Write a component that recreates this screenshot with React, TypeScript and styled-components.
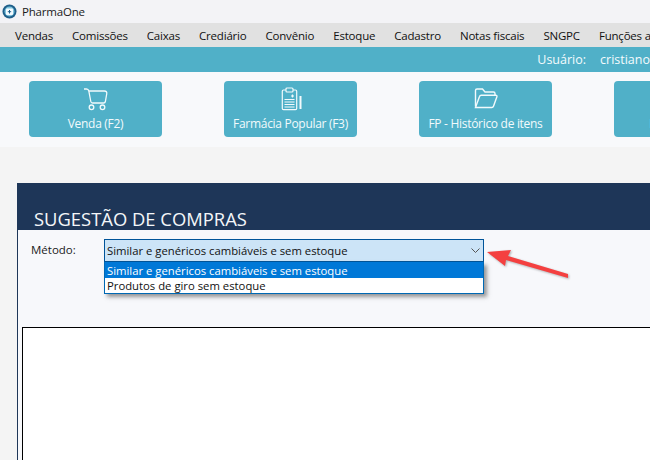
import styled, { createGlobalStyle } from "styled-components";

const GlobalStyle = createGlobalStyle`
  html, body {
    margin: 0;
    padding: 0;
    width: 650px;
    height: 460px;
    overflow: hidden;
    background: #f4f4f4;
    font-family: "Open Sans", "Noto Sans", sans-serif;
  }
  * { box-sizing: border-box; }
`;

const Wrapper = styled.div`
  position: relative;
  width: 650px;
  height: 460px;
  overflow: hidden;
  display: flex;
  flex-direction: column;
`;

const TitleBar = styled.div`
  height: 23px;
  flex: none;
  display: flex;
  align-items: center;
  gap: 5px;
  padding-left: 2px;
  background: #f3f3f6;
  font-size: 11.5px;
  letter-spacing: -0.2px;
  color: #1a1a1a;
`;

const MenuBar = styled.div`
  height: 24px;
  flex: none;
  display: flex;
  align-items: center;
  gap: 19px;
  padding-left: 15px;
  background: #e1e1e1;
  white-space: nowrap;
`;

const MenuItem = styled.span`
  font-size: 11.5px;
  letter-spacing: -0.2px;
  font-weight: 500;
  color: #111;
`;

const UserBar = styled.div`
  height: 25px;
  flex: none;
  display: flex;
  align-items: center;
  justify-content: flex-end;
  gap: 14px;
  background: #50b0c8;
  color: #f4fbfd;
  font-size: 12.5px;
  white-space: nowrap;
`;

const Toolbar = styled.div`
  height: 75px;
  flex: none;
  display: flex;
  gap: 62px;
  padding: 9px 0 0 29px;
  background: #f8f9fb;
`;

const ToolButton = styled.div`
  width: 133px;
  height: 56px;
  flex: none;
  display: flex;
  flex-direction: column;
  align-items: center;
  border-radius: 4px;
  background: #50b0c8;
  color: #f2fafc;
  font-size: 12px;
  letter-spacing: -0.3px;
  white-space: nowrap;
`;

const IconSlot = styled.div`
  height: 34px;
  padding-top: 6px;
  flex: none;
  display: flex;
  justify-content: center;
`;

const ClippedLabel = styled.span`
  margin-right: 57px;
`;

const Spacer = styled.div`
  height: 36px;
  flex: none;
`;

const Panel = styled.div`
  flex: 1;
  margin-left: 17px;
  display: flex;
  flex-direction: column;
  border-left: 1px solid #1e3658;
`;

const PanelHeader = styled.div`
  height: 47px;
  flex: none;
  display: flex;
  align-items: flex-end;
  padding: 0 0 0 17px;
  margin-left: -1px;
  background: #1e3658;
  color: #f4f6f9;
  font-size: 18.4px;
  line-height: 23px;
  white-space: nowrap;
`;

const PanelBody = styled.div`
  flex: 1;
  display: flex;
  flex-direction: column;
  background: #f7f8fb;
  padding: 9px 0 0 4px;
`;

const MethodRow = styled.div`
  height: 88px;
  flex: none;
  display: flex;
  align-items: flex-start;
`;

const MethodLabel = styled.label`
  width: 82px;
  flex: none;
  padding: 3px 0 0 9px;
  font-size: 11.5px;
  color: #1a1a1a;
`;

const SelectWrap = styled.div`
  position: relative;
  width: 380px;
`;

const SelectBox = styled.div`
  height: 23px;
  display: flex;
  align-items: center;
  justify-content: space-between;
  padding: 0 3px 0 2px;
  background: #cce4f7;
  border: 1px solid #005499;
  font-size: 11.3px;
  color: #111;
`;

const DropList = styled.ul`
  position: absolute;
  top: 23px;
  left: 0;
  width: 100%;
  margin: 0;
  padding: 0;
  list-style: none;
  background: #fff;
  border: 1px solid #0069b4;
  border-top: 0;
  box-shadow: 3px 3px 4px rgba(70, 70, 70, 0.55);
`;

const DropItem = styled.li<{ $active?: boolean }>`
  height: ${(p) => (p.$active ? "16px" : "15px")};
  padding-left: 2px;
  display: flex;
  align-items: center;
  font-size: 11.3px;
  background: ${(p) => (p.$active ? "#0078d7" : "#fff")};
  color: ${(p) => (p.$active ? "#fff" : "#111")};
`;

const GridBox = styled.div`
  flex: 1;
  margin-right: -8px;
  background: #fff;
  border: 1px solid #000;
  border-bottom: 0;
`;

const Arrow = styled.svg`
  position: absolute;
  left: 484px;
  top: 246px;
  filter: drop-shadow(1px 1px 1px rgba(0, 0, 0, 0.3));
`;

function CartIcon() {
  return (
    <svg width="26" height="24" viewBox="0 0 26 24" fill="none" stroke="#f2fafc" strokeWidth="1.3">
      <path d="M1 2h2.500c1.400 0 2 .7 2.300 2l2 10.500c.2 1 .8 1.500 1.800 1.500h11c1 0 1.600-.5 1.800-1.500l1.300-7.500c.4-2-.4-3-2.300-3H5.800" />
      <circle cx="8.500" cy="20.300" r="2.300" />
      <circle cx="19.500" cy="20.300" r="2.300" />
    </svg>
  );
}

function ClipboardIcon() {
  return (
    <svg width="24" height="24" viewBox="-2 0 24 24" fill="none" stroke="#f2fafc" strokeWidth="1.200">
      <path d="M5 3H2.500C1.700 3 1.300 3.400 1.300 4.200v17.300c0 .8.400 1.200 1.200 1.200h12c.8 0 1.200-.4 1.200-1.200V4.200c0-.8-.4-1.200-1.200-1.200H12" />
      <rect x="5" y="1" width="7" height="4" rx="1" />
      <path d="M11.500 7.500v3M10 9h3" />
      <path d="M3.500 12.500h10M3.500 15h10M3.500 17.500h10M3.500 20h10" />
      <path d="M19.500 9v13" strokeWidth="2" />
    </svg>
  );
}

function FolderIcon() {
  return (
    <svg width="24" height="22" viewBox="0 0 24 22" fill="none" stroke="#f2fafc" strokeWidth="1.400">
      <path d="M1.500 19.500V3.500c0-1 .6-1.500 1.500-1.500h5.500l2.500 3h8.500c1 0 1.500.5 1.500 1.500V8" />
      <path d="M1.500 20.500 5.500 9.500c.3-.9.800-1.300 1.700-1.300h14.500c1 0 1.500.6 1.200 1.500l-3.400 9.600c-.3.900-.8 1.200-1.700 1.200z" />
    </svg>
  );
}

function AppLogo() {
  return (
    <svg width="15" height="15" viewBox="0 0 15 15">
      <circle cx="7.500" cy="7.500" r="7" fill="#1f5f8a" />
      <circle cx="7.500" cy="7.500" r="5" fill="#7fc4de" />
      <rect x="4" y="4.500" width="7" height="6.500" rx="1" fill="#f4fbff" />
      <path d="M7.500 6v3.500M5.800 7.700h3.400" stroke="#1f5f8a" strokeWidth="1" />
    </svg>
  );
}

const menu = ["Vendas", "Comissões", "Caixas", "Crediário", "Convênio", "Estoque", "Cadastro", "Notas fiscais", "SNGPC", "Funções a"];

export default function App() {
  return (
    <Wrapper>
      <GlobalStyle />
      <TitleBar>
        <AppLogo />
        <span>PharmaOne</span>
      </TitleBar>
      <MenuBar>
        {menu.map((m) => (
          <MenuItem key={m}>{m}</MenuItem>
        ))}
      </MenuBar>
      <UserBar>
        <span>Usuário:</span>
        <span>cristiano</span>
      </UserBar>
      <Toolbar>
        <ToolButton>
          <IconSlot><CartIcon /></IconSlot>
          <span>Venda (F2)</span>
        </ToolButton>
        <ToolButton>
          <IconSlot><ClipboardIcon /></IconSlot>
          <span>Farmácia Popular (F3)</span>
        </ToolButton>
        <ToolButton>
          <IconSlot><FolderIcon /></IconSlot>
          <span>FP - Histórico de itens</span>
        </ToolButton>
        <ToolButton>
          <IconSlot />
          <ClippedLabel>F</ClippedLabel>
        </ToolButton>
      </Toolbar>
      <Spacer />
      <Panel>
        <PanelHeader>SUGESTÃO DE COMPRAS</PanelHeader>
        <PanelBody>
          <MethodRow>
            <MethodLabel>Método:</MethodLabel>
            <SelectWrap>
              <SelectBox>
                <span>Similar e genéricos cambiáveis e sem estoque</span>
                <svg width="9" height="5" viewBox="0 0 9 5" fill="none" stroke="#555" strokeWidth="1">
                  <path d="M.5.500 4.500 4.500l4-4" />
                </svg>
              </SelectBox>
              <DropList>
                <DropItem $active>Similar e genéricos cambiáveis e sem estoque</DropItem>
                <DropItem>Produtos de giro sem estoque</DropItem>
              </DropList>
            </SelectWrap>
          </MethodRow>
          <GridBox />
        </PanelBody>
      </Panel>
      <Arrow width="88" height="36" viewBox="0 0 88 36" fill="none">
        <path d="M3 6 27 4 24 10 84 28 84 32 22 14 21 20z" fill="#f44040" />
      </Arrow>
    </Wrapper>
  );
}
